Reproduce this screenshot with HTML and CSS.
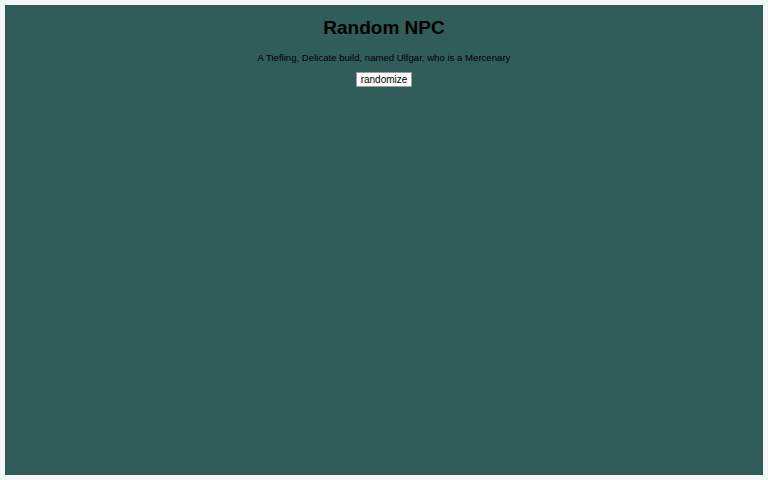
FILE: index.html
```html
<!DOCTYPE html>
<html lang="en">
<head>
    <meta charset="UTF-8">
    <meta name="viewport" content="width=device-width, initial-scale=1.0">
    <title>Random NPC</title>
    <link rel="stylesheet" href="styles.css">
</head>
<body>
    <div class="app">
        <h1>Random NPC</h1>
        <p id="npc">A Tiefling, Delicate build, named Ulfgar, who is a Mercenary</p>
        <button onclick="randomize()">randomize</button>
    </div>

    <script>
        const races = ['Human', 'Elf', 'Dwarf', 'Halfling', 'Tiefling', 'Gnome', 'Half-Orc'];
        const builds = ['Delicate', 'Stocky', 'Lanky', 'Muscular', 'Plump'];
        const names = ['Ulfgar', 'Mira', 'Thorin', 'Sable', 'Garrick', 'Ilsa'];
        const jobs = ['Mercenary', 'Blacksmith', 'Innkeeper', 'Merchant', 'Priest'];

        function pick(list) {
            return list[Math.floor(Math.random() * list.length)];
        }

        function randomize() {
            document.getElementById('npc').textContent =
                `A ${pick(races)}, ${pick(builds)} build, named ${pick(names)}, who is a ${pick(jobs)}`;
        }
    </script>
</body>
</html>
```

FILE: styles.css
```css
body {
    margin: 5px;
    background-color: #f2f6f6;
    font-family: "Liberation Sans", Arial, sans-serif;
}
.app {
    background-color: #305c5a;
    height: 470px;
    text-align: center;
    padding-top: 1px;
    box-sizing: border-box;
}
h1 {
    font-size: 19px;
    margin: 11px 0 0;
    color: #000;
}
p {
    font-size: 9.6px;
    margin: 13px 0 6px;
    color: #000;
}
button {
    font-family: "Liberation Sans", Arial, sans-serif;
    font-size: 10px;
    background-color: white;
    border: 1px solid #999;
    padding: 0 4px;
    height: 15px;
    line-height: 13px;
    color: #000;
}
```
